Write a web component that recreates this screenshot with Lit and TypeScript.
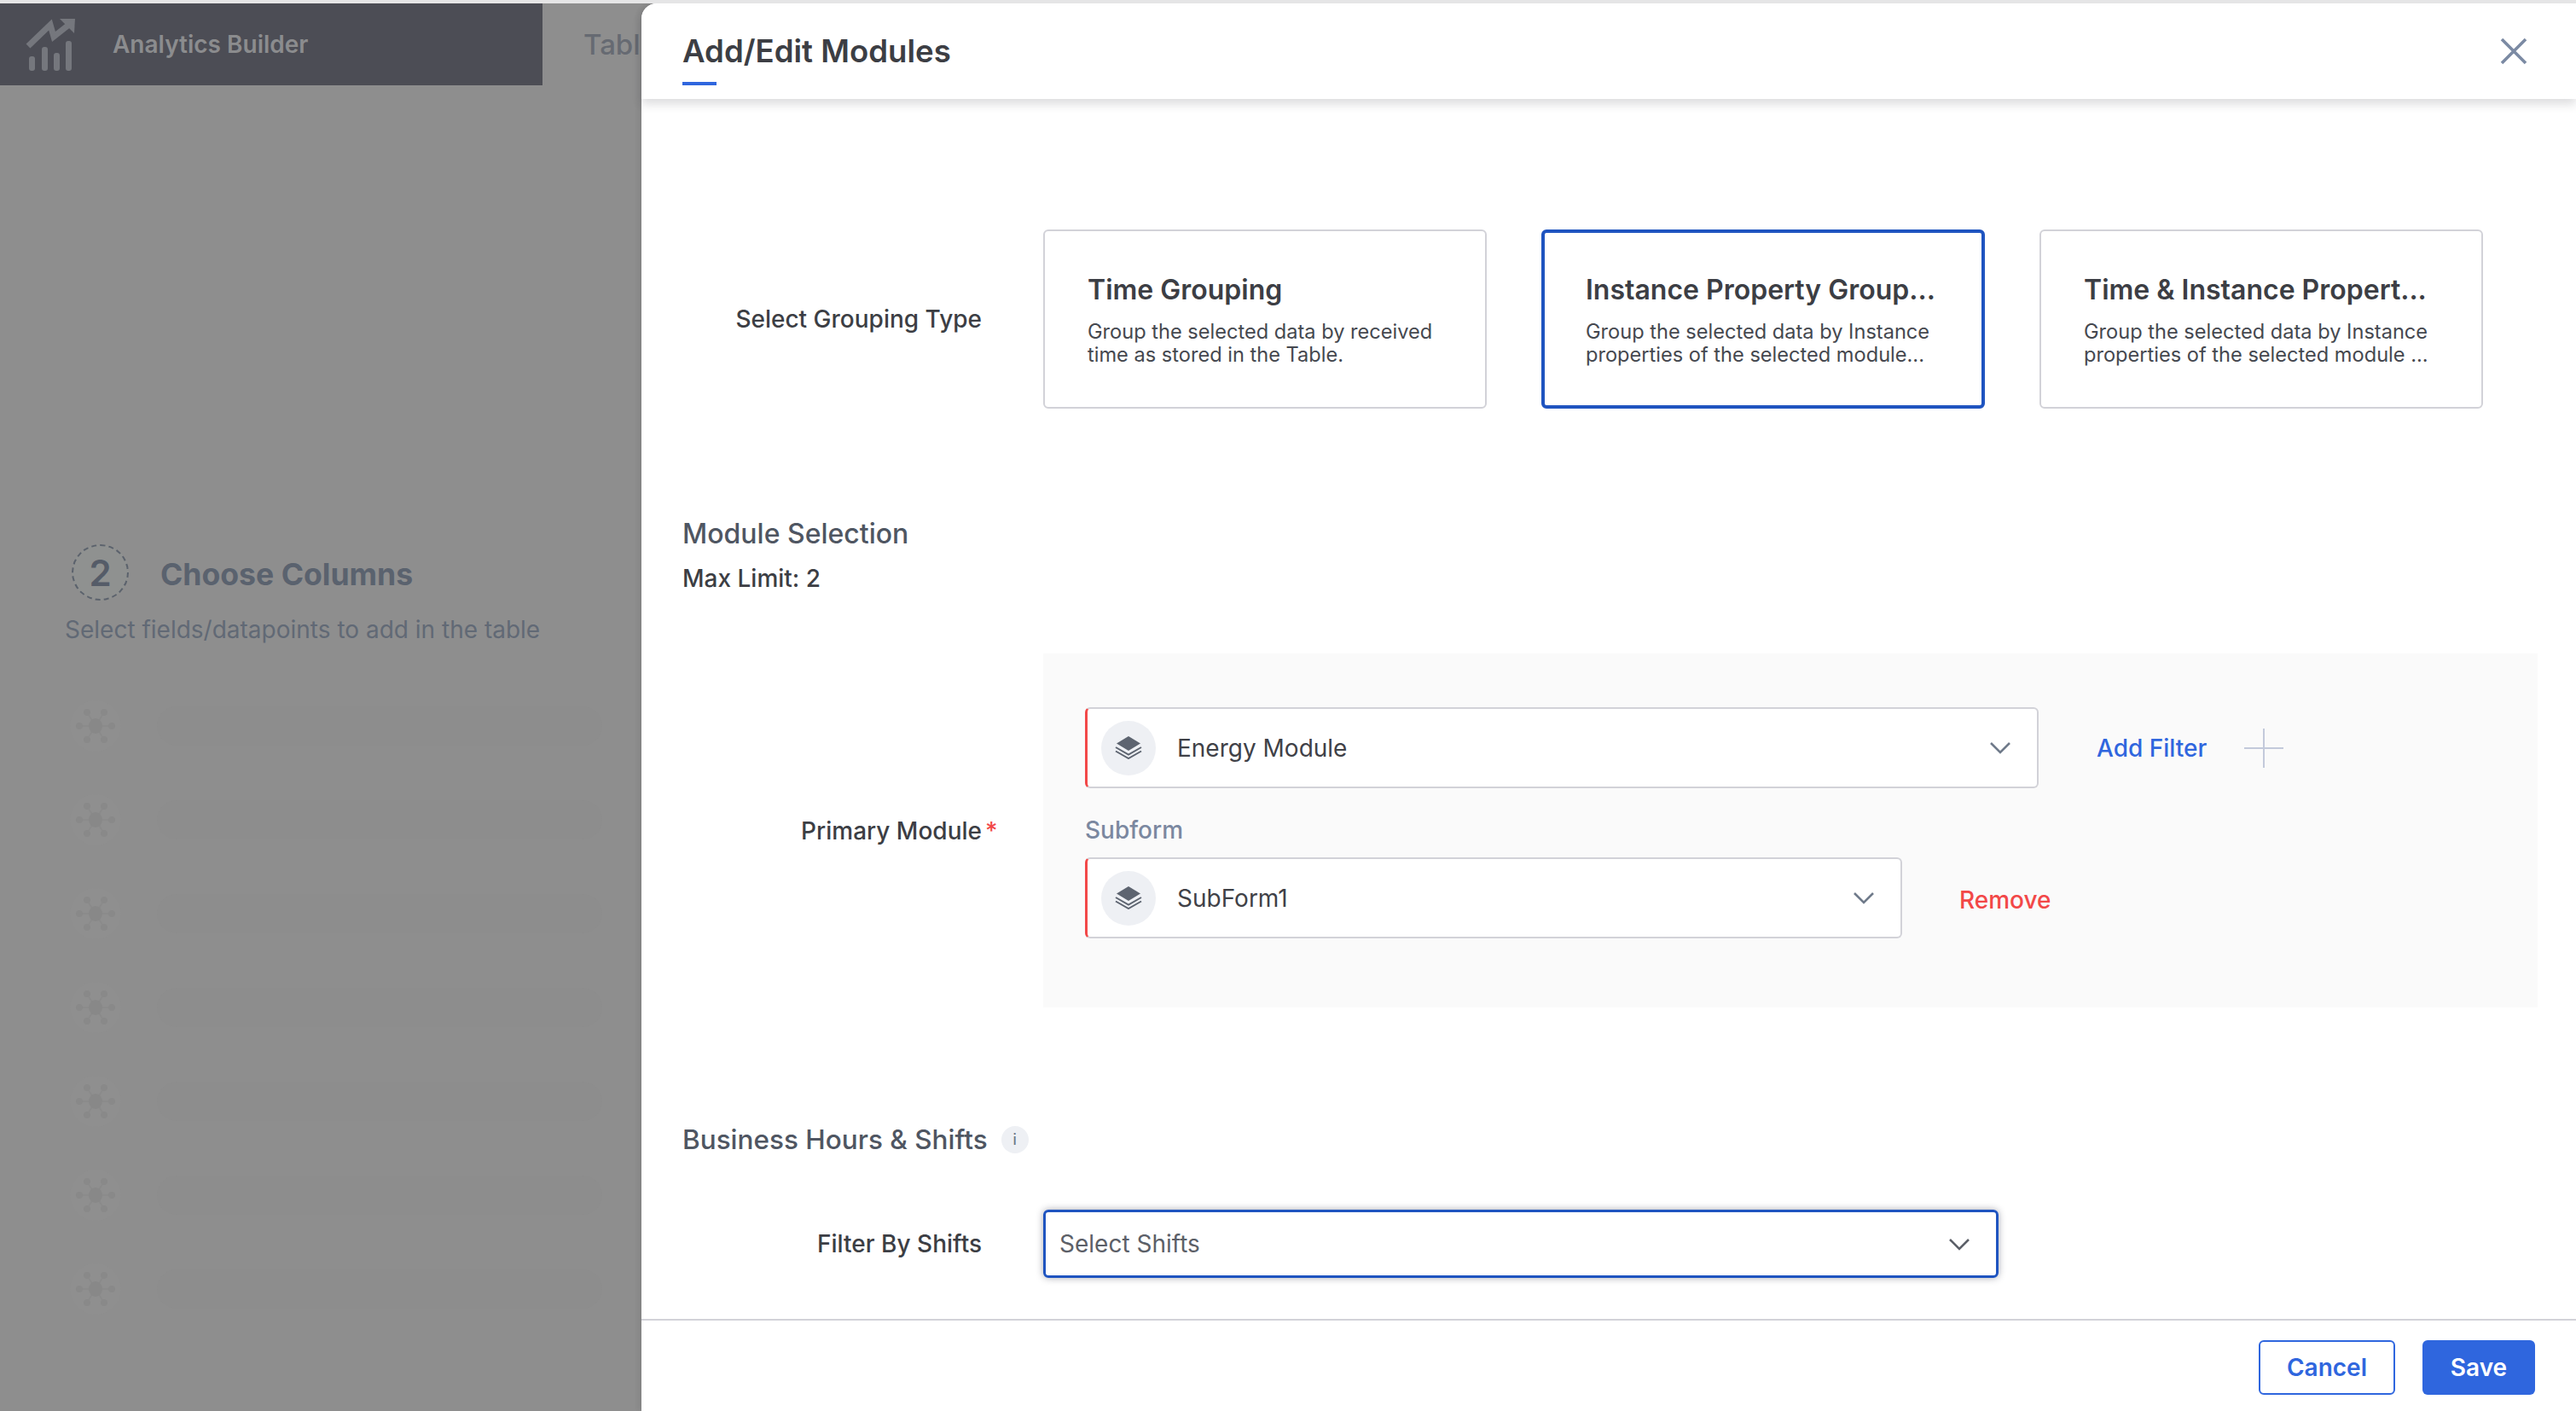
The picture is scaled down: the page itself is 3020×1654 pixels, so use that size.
import { LitElement, css, html, svg } from 'lit'
import { customElement } from 'lit/decorators.js'
import { classMap } from 'lit/directives/class-map.js'

const groupings = [
    { title: 'Time Grouping', lines: ['Group the selected data by received', 'time as stored in the Table.'], selected: false },
    { title: 'Instance Property Group...', lines: ['Group the selected data by Instance', 'properties of the selected module...'], selected: true },
    { title: 'Time & Instance Propert...', lines: ['Group the selected data by Instance', 'properties of the selected module ...'], selected: false },
]

const chevron = html`<svg class="chevron" width="26" height="15" viewBox="0 0 26 15"><path d="M2 2l11 11L24 2" fill="none" stroke="currentColor" stroke-width="2.6"/></svg>`

const stack = html`<span class="stack">
    <svg width="32" height="27" viewBox="0 0 32 27">
        <path d="M16 0l14 8.5-14 8.5L2 8.5z" fill="#5d6470"/>
        <path d="M1 13l15 8.5L31 13M1 17.5l15 8.5 15-8.5" fill="none" stroke="#5d6470" stroke-width="2"/>
    </svg>
</span>`

const skeletonGlyph = svg`
    <circle cx="30" cy="30" r="30" fill="#8f8f8f"/>
    <path d="M30 30L20 14M30 30L40 14M30 30L11 30M30 30L49 30M30 30L20 46M30 30L40 46" stroke="#8a8a8a" stroke-width="1.5"/>
    <ellipse cx="30" cy="30" rx="8" ry="9" fill="#888888"/>
    <g fill="#898989">
        <circle cx="20" cy="14" r="4"/><circle cx="40" cy="14" r="4"/>
        <circle cx="11" cy="30" r="4"/><circle cx="49" cy="30" r="4"/>
        <circle cx="20" cy="46" r="4"/><circle cx="40" cy="46" r="4"/>
    </g>`

@customElement('app-root')
export class AppRoot extends LitElement {

    render() {
        return html`
            <div class="page">
                <div class="behind">
                    <div class="topbar">
                        <div class="brand">
                            <svg class="logo" width="60" height="62" viewBox="0 0 60 62">
                                <path d="M3 33L29 8l4 14L52 7" fill="none" stroke="#75777d" stroke-width="7"/>
                                <path d="M40 1h18l-1 17z" fill="#75777d"/>
                                <g fill="#75777d">
                                    <rect x="4" y="45" width="7" height="17" rx="3"/>
                                    <rect x="19" y="34" width="7" height="28" rx="3"/>
                                    <rect x="33" y="41" width="7" height="21" rx="3"/>
                                    <rect x="47" y="27" width="7" height="35" rx="3"/>
                                </g>
                            </svg>
                            <span class="brand-name">Analytics Builder</span>
                        </div>
                        <span class="tab">Tabl</span>
                    </div>
                    <div class="step">
                        <span class="step-num">2</span>
                        <span class="step-title">Choose Columns</span>
                    </div>
                    <div class="step-desc">Select fields/datapoints to add in the table</div>
                    <div class="skeletons">
                        ${[0, 1, 2, 3, 4, 5, 6].map(() => html`
                            <div class="skeleton">
                                <svg width="60" height="60" viewBox="0 0 60 60">${skeletonGlyph}</svg>
                                <div class="skeleton-bar"></div>
                            </div>
                        `)}
                    </div>
                </div>

                <section class="drawer">
                    <header class="drawer-head">
                        <h1>Add/Edit Modules</h1>
                        <svg class="close" width="32" height="32" viewBox="0 0 32 32"><path d="M2 2l28 28M30 2L2 30" stroke="#7b8aa3" stroke-width="3.6"/></svg>
                    </header>

                    <div class="drawer-body">
                        <div class="row grouping">
                            <label class="label">Select Grouping Type</label>
                            <div class="cards">
                                ${groupings.map(g => html`
                                    <div class=${classMap({ card: true, selected: g.selected })}>
                                        <div class="card-title">${g.title}</div>
                                        ${g.lines.map(l => html`<div class="card-line">${l}</div>`)}
                                    </div>
                                `)}
                            </div>
                        </div>

                        <h2 class="section module-section">Module Selection</h2>
                        <div class="limit">Max Limit: 2</div>

                        <div class="row primary">
                            <label class="label">Primary Module<span class="star">*</span></label>
                            <div class="module-box">
                                <div class="select-line">
                                    <div class="select module">
                                        ${stack}
                                        <span class="select-text">Energy Module</span>
                                        ${chevron}
                                    </div>
                                    <a class="add-filter">Add Filter</a>
                                    <svg class="plus" width="46" height="46" viewBox="0 0 46 46"><path d="M23 0v46M0 23h46" stroke="#c3cadb" stroke-width="2"/></svg>
                                </div>
                                <div class="subform">Subform</div>
                                <div class="select-line">
                                    <div class="select subselect">
                                        ${stack}
                                        <span class="select-text">SubForm1</span>
                                        ${chevron}
                                    </div>
                                    <a class="remove">Remove</a>
                                </div>
                            </div>
                        </div>

                        <h2 class="section hours">Business Hours &amp; Shifts <span class="info">i</span></h2>

                        <div class="row shifts">
                            <label class="label">Filter By Shifts</label>
                            <div class="shift-select">
                                <span class="select-text placeholder">Select Shifts</span>
                                ${chevron}
                            </div>
                        </div>
                    </div>

                    <footer class="drawer-foot">
                        <button class="btn outline">Cancel</button>
                        <button class="btn solid">Save</button>
                    </footer>
                </section>
            </div>
        `
    }

    static styles = css`
        :host {
            display: block;
            font-family: Inter, "Noto Sans", sans-serif;
        }

        * {
            box-sizing: border-box;
        }

        .page {
            display: flex;
            width: 3020px;
            height: 1654px;
            border-top: 4px solid #e5e5e6;
            background: #8e8e8e;
            overflow: hidden;
        }

        /* dimmed builder page behind the drawer */
        .behind {
            width: 752px;
            flex: none;
            overflow: hidden;
        }

        .topbar {
            display: flex;
            align-items: center;
            height: 96px;
            white-space: nowrap;
        }

        .brand {
            display: flex;
            align-items: center;
            flex: none;
            width: 636px;
            height: 96px;
            padding-left: 30px;
            background: #4c4d55;
        }

        .brand-name {
            margin-left: 42px;
            font-size: 28px;
            font-weight: 600;
            color: #8b8c8e;
        }

        .tab {
            margin-left: 48px;
            font-size: 33px;
            font-weight: 500;
            color: #666a72;
        }

        .step {
            display: flex;
            align-items: center;
            margin: 538px 0 0 84px;
        }

        .step-num {
            display: flex;
            align-items: center;
            justify-content: center;
            width: 67px;
            height: 66px;
            border: 2px dashed #5b626c;
            border-radius: 50%;
            background: #8f9190;
            font-size: 42px;
            font-weight: 600;
            color: #555c68;
        }

        .step-title {
            margin-left: 37px;
            padding-top: 4px;
            font-size: 35.6px;
            font-weight: 700;
            color: #5a626e;
        }

        .step-desc {
            margin: 14px 0 0 76px;
            font-size: 28px;
            line-height: 40px;
            color: #616975;
            white-space: nowrap;
        }

        .skeletons {
            display: flex;
            flex-direction: column;
            gap: 50px;
            margin: 63px 0 0 82px;
        }

        .skeleton {
            display: flex;
            align-items: center;
            height: 60px;
        }

        .skeleton-bar {
            width: 522px;
            height: 46px;
            margin-left: 42px;
            border-radius: 23px;
            background: #8d8d8d;
        }

        /* drawer */
        .drawer {
            display: flex;
            flex-direction: column;
            flex: 1;
            background: #fff;
            border-top-left-radius: 18px;
            box-shadow: -3px 0 6px rgba(0, 0, 0, .08);
        }

        .drawer-head {
            position: relative;
            z-index: 1;
            display: flex;
            align-items: center;
            justify-content: space-between;
            flex: none;
            height: 112px;
            padding: 0 57px 0 48px;
            background: #fff;
            border-top-left-radius: 18px;
            box-shadow: 0 6px 12px rgba(40, 40, 50, .16);
        }

        h1 {
            margin: 0;
            font-size: 36.6px;
            font-weight: 600;
            color: #3c3e44;
        }

        h1::after {
            content: "";
            position: absolute;
            left: 48px;
            top: 92px;
            width: 40px;
            height: 4px;
            background: #2f66de;
        }

        .drawer-body {
            flex: 1;
            padding-left: 48px;
        }

        .row {
            display: flex;
            align-items: center;
        }

        .label {
            flex: none;
            width: 351px;
            margin-right: 72px;
            text-align: right;
            font-size: 28px;
            font-weight: 500;
            color: #3c3e44;
            white-space: nowrap;
        }

        .star {
            position: absolute;
            margin-left: 4px;
            color: #f24848;
        }

        .grouping {
            margin-top: 153px;
        }

        .cards {
            display: flex;
            gap: 64px;
        }

        .card {
            width: 520px;
            height: 210px;
            padding: 49px 24px 0 50px;
            border: 2px solid #d2d2d8;
            border-radius: 6px;
            white-space: nowrap;
        }

        .card.selected {
            padding: 47px 22px 0 48px;
            border: 4px solid #1f54c0;
        }

        .card-title {
            margin-bottom: 15px;
            font-size: 32px;
            line-height: 40px;
            font-weight: 600;
            color: #3c3e44;
        }

        .card-line {
            font-size: 23.6px;
            line-height: 27px;
            color: #45484f;
        }

        .section {
            margin: 0;
            font-size: 32px;
            line-height: 40px;
            font-weight: 500;
            color: #4f5662;
        }

        .module-section {
            margin-top: 127px;
        }

        .limit {
            margin-top: 14px;
            font-size: 28px;
            line-height: 36px;
            font-weight: 500;
            color: #3c3e44;
        }

        .primary {
            margin-top: 70px;
        }

        .module-box {
            flex: none;
            width: 1752px;
            height: 415px;
            padding: 63px 0 0 49px;
            background: #fafafa;
        }

        .select-line {
            display: flex;
            align-items: center;
        }

        .select {
            display: flex;
            align-items: center;
            height: 95px;
            padding: 0 30px 0 16px;
            background: #fff;
            border: 2px solid #d2d2d8;
            border-left: 3px solid #f24848;
            border-radius: 6px;
        }

        .select.module {
            width: 1118px;
        }

        .select.subselect {
            width: 958px;
        }

        .stack {
            display: flex;
            align-items: center;
            justify-content: center;
            flex: none;
            width: 64px;
            height: 64px;
            margin-right: 25px;
            border-radius: 50%;
            background: #eef0f4;
        }

        .select-text {
            flex: 1;
            font-size: 28px;
            color: #3f4147;
        }

        .chevron {
            flex: none;
            color: #6f7a8a;
        }

        .add-filter {
            margin-left: 68px;
            font-size: 28px;
            font-weight: 500;
            color: #2f66de;
        }

        .plus {
            margin-left: 44px;
        }

        .remove {
            margin: 4px 0 0 67px;
            font-size: 28px;
            font-weight: 500;
            color: #f24848;
        }

        .subform {
            margin: 31px 0 14px;
            font-size: 28px;
            line-height: 36px;
            font-weight: 500;
            color: #7b88a0;
        }

        .hours {
            display: flex;
            align-items: center;
            gap: 16px;
            margin-top: 135px;
            font-size: 31.5px;
        }

        .info {
            display: flex;
            align-items: center;
            justify-content: center;
            width: 32px;
            height: 32px;
            border-radius: 50%;
            background: #eef0f4;
            font-size: 17px;
            color: #6f7a8a;
        }

        .shifts {
            margin-top: 62px;
        }

        .shift-select {
            display: flex;
            align-items: center;
            width: 1120px;
            height: 80px;
            padding: 0 30px 0 16px;
            border: 3px solid #1f54c0;
            border-radius: 6px;
            box-shadow: 0 0 8px rgba(40, 40, 60, .4);
        }

        .shift-select .chevron {
            color: #5c6068;
        }

        .placeholder {
            color: #5c6068;
        }

        .drawer-foot {
            display: flex;
            justify-content: flex-end;
            gap: 32px;
            flex: none;
            height: 108px;
            padding: 23px 48px 0 0;
            border-top: 2px solid #d2d2d8;
        }

        .btn {
            height: 64px;
            border-radius: 6px;
            font-family: inherit;
            font-size: 28px;
            font-weight: 600;
        }

        .btn.outline {
            width: 160px;
            background: #fff;
            border: 2px solid #2f66de;
            color: #2f66de;
        }

        .btn.solid {
            width: 132px;
            background: #2f66de;
            border: 0;
            color: #fff;
        }
    `
}

declare global {
    interface HTMLElementTagNameMap {
        'app-root': AppRoot
    }
}
